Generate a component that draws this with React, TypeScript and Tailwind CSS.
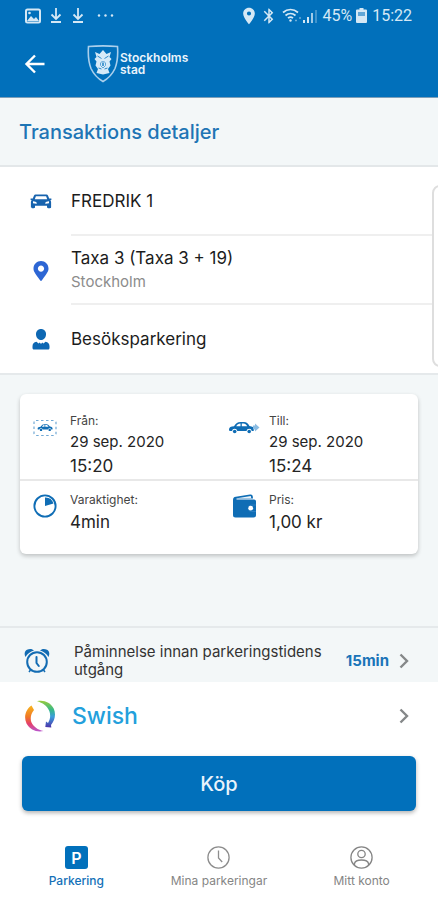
import type { ReactNode } from "react";
import { FaMapMarkerAlt } from "react-icons/fa";
import { MdBluetooth, MdPlace } from "react-icons/md";

const BLUE = "#0170bb";

function StatusBar() {
  return (
    <div className="flex h-8 items-center justify-between pl-6 pr-[26px] text-[#d5e8f5]">
      <div className="flex items-center">
        <svg width="17" height="16" viewBox="0 0 17 16" fill="none" stroke="currentColor" aria-hidden="true">
          <rect x="2" y="1.5" width="14" height="13" rx="1.5" strokeWidth="2" />
          <path d="M3 13l4-5 3 3 2-2 3 4z" fill="currentColor" stroke="none" />
          <circle cx="5.5" cy="5" r="1.3" fill="currentColor" stroke="none" />
        </svg>
        <DownloadMark />
        <DownloadMark />
        <svg className="ml-3" width="17" height="16" viewBox="0 0 17 16" fill="currentColor" aria-hidden="true">
          <circle cx="2" cy="7.5" r="1.2" />
          <circle cx="8.5" cy="7.5" r="1.2" />
          <circle cx="15" cy="7.5" r="1.2" />
        </svg>
      </div>
      <div className="flex items-center font-[Roboto,sans-serif] text-base leading-5">
        <MdPlace size={20} aria-hidden="true" />
        <MdBluetooth className="ml-px" size={18} aria-hidden="true" />
        <svg className="ml-1" width="20" height="16" viewBox="0 0 20 16" fill="none" stroke="currentColor" strokeWidth="1.7" aria-hidden="true">
          <path d="M1 4.5c4.500-4 10.500-4 15 0M3.500 7.500c3-2.700 7-2.700 10 0M6 10.200c1.500-1.300 3.500-1.300 5 0" />
          <circle cx="8.500" cy="12.500" r="1.200" fill="currentColor" stroke="none" />
          <path d="M13 12.500h2M17 10h2" opacity=".5" />
        </svg>
        <svg width="15" height="16" viewBox="0 0 15 16" fill="currentColor" aria-hidden="true">
          <path d="M1 12h2v3H1zM5 9h2v6H5z" />
          <path d="M9 5h2v10H9z" opacity=".75" />
          <path d="M13 2h2v13h-2z" opacity=".3" />
        </svg>
        <span className="ml-[5px]">45%</span>
        <svg className="ml-1 mr-[5px]" width="11" height="16" viewBox="0 0 11 16" aria-hidden="true">
          <path fill="currentColor" d="M3.500 0h4v1.500H10a1 1 0 0 1 1 1V14a1 1 0 0 1-1 1H1a1 1 0 0 1-1-1V2.500a1 1 0 0 1 1-1h2.500z" />
          <path d="M2 4h7v4H2z" fill={BLUE} opacity=".55" />
        </svg>
        <span>15:22</span>
      </div>
    </div>
  );
}

function DownloadMark() {
  return (
    <svg className="ml-2" width="14" height="16" viewBox="0 0 14 16" fill="none" stroke="currentColor" strokeWidth="1.8" aria-hidden="true">
      <path d="M7 0v11M2.500 6.500 7 11l4.500-4.500M2 14h10" />
    </svg>
  );
}

function CityLogo() {
  return (
    <div className="flex items-center gap-px text-[#eaf4fb]">
      <svg width="32" height="38" viewBox="0 0 32 38" aria-hidden="true">
        <path d="M1.500 1.500Q16 .2 30.500 1.500q1 13-2.500 22Q24 32 16 36.500 8 32 4 23.500q-3.500-9-2.500-22z" fill="none" stroke="#a9cfec" strokeWidth="1.600" />
        <path
          d="M8 7l4.500 2L16 5l3.500 4L24 7l-1.500 5 2 2-2 2.500 1 4L21 24l1.500 4-6.500 1.500L9.500 28l1.500-4-2.500-3.500 1-4-2-2.500 2-2z"
          fill="#d6eaf8"
        />
        <path d="M10.500 11l4 2.500M21.500 11l-4 2.500M11.500 23l3 1M20.500 23l-3 1" stroke={BLUE} strokeWidth=".8" fill="none" />
        <path d="M13.500 18c1-2 4-2 5 0v2.500L16 23l-2.500-2.500z" fill="none" stroke="#5fa5d8" strokeWidth="1" />
        <path d="M16 17.500v3.500" stroke={BLUE} strokeWidth="1.300" />
      </svg>
      <span className="text-[12px] font-semibold leading-3">
        Stockholms
        <br />
        stad
      </span>
    </div>
  );
}

function FrontCarIcon() {
  return (
    <svg width="22" height="15" viewBox="0 0 22 15" aria-hidden="true">
      <path
        fill="#1763ae"
        fillRule="evenodd"
        d="M5.500.5h11c.7 0 1.200.3 1.500 1l1.200 3H21c.7 0 .9.800.3 1.200l-.9.600c.5.500.7 1.200.7 1.900V13c0 .8-.4 1.200-1.200 1.200h-1.700c-.8 0-1.200-.4-1.200-1.200v-1.200H5V13c0 .8-.4 1.200-1.200 1.200H2.100C1.300 14.200.900 13.800.900 13V8.200c0-.7.200-1.400.7-1.900l-.9-.600C.1 5.300.3 4.500 1 4.500h1.800l1.200-3c.3-.7.800-1 1.500-1zM5.900 2.300 4.800 5.200h12.400l-1.100-2.900zM3 7.300v1.900l3.200.6c.6 0 .8-.3.600-.8C6.400 8 5 7.300 3 7.300zm16 0c-2 0-3.400.7-3.800 1.700-.2.500 0 .8.600.8l3.200-.6z"
      />
    </svg>
  );
}

function PersonIcon() {
  return (
    <svg width="18" height="21" viewBox="0 0 18 21" fill="#0e68b3" aria-hidden="true">
      <path d="M9 0c3 0 5 2.200 5 5.200S12 11 9 11 4 8.200 4 5.200 6 0 9 0z" />
      <path d="M4.500 12.800 6.500 14.500l1.300-1 1.200 1.500 1.200-1.500 1.300 1 2-1.700c2.700.4 4 2.100 4 4.500V19c0 .9-.5 1.500-1.500 1.500H2C1 20.500.5 19.900.5 19v-1.700c0-2.400 1.300-4.100 4-4.500z" />
    </svg>
  );
}

const SIDE_CAR =
  "M1 9.500c0-2.200 2-3 5-3.200C8 3.200 9.500 2 12.500 2H16c2.500 0 4 1.500 5.500 4 3 .4 4.500 1.300 4.500 3.500 0 1-.5 1.500-1.500 1.500h-.7a2.700 2.700 0 0 0-5.300 0H9.300a2.700 2.700 0 0 0-5.300 0H2.500C1.500 11 1 10.500 1 9.500zM8.200 6.200h4.300V3.500c-2 0-3.200.8-4.300 2.700zm5.600 0h5.400c-1-1.900-2-2.700-3.700-2.700h-1.700z";

function ParkedCarIcon() {
  return (
    <svg width="24" height="18" viewBox="0 0 24 18" aria-hidden="true">
      <rect x="1" y="1.500" width="22" height="15" rx="2" fill="none" stroke="#71a9d5" strokeWidth="1.200" strokeDasharray="2.500 2.500" />
      <g transform="translate(4 4) scale(.6)" fill="#0f6db5">
        <path fillRule="evenodd" d={SIDE_CAR} />
        <circle cx="6.700" cy="11.500" r="2" />
        <circle cx="21.200" cy="11.500" r="2" />
      </g>
    </svg>
  );
}

function DepartingCarIcon() {
  return (
    <svg width="32" height="16" viewBox="0 0 32 14" aria-hidden="true">
      <g fill="#0f6db5">
        <path fillRule="evenodd" d={SIDE_CAR} />
        <circle cx="6.700" cy="11.500" r="1.800" />
        <circle cx="21.200" cy="11.500" r="1.800" />
      </g>
      <path d="M25 5.500h2V3.500l4.500 4-4.500 4v-2h-2z" fill="#8bbce2" />
    </svg>
  );
}

function QuarterClockIcon() {
  return (
    <svg width="24" height="24" viewBox="0 0 24 24" aria-hidden="true">
      <circle cx="12" cy="12" r="10.600" fill="none" stroke="#0f6db5" strokeWidth="1.900" />
      <path d="M12 3.500V12l8.500-2.500A8.500 8.500 0 0 0 12 3.500z" fill="#0f6db5" />
    </svg>
  );
}

function WalletIcon() {
  return (
    <svg width="24" height="24" viewBox="0 0 24 24" aria-hidden="true">
      <path d="M1 6c0-2 .8-2.900 2.800-3.200L18 .5c1.700-.3 2.600.4 2.800 2L21 4.500H4.500v1H22c1.200 0 2 .8 2 2V21c0 1.700-.8 2.500-2.500 2.500h-18C1.800 23.500 1 22.700 1 21z" fill="#0f6db5" />
      <path d="M5 4.200 18.800 2l.4 2.300z" fill="#e8f3fb" />
      <path d="M24 11h-4.500a3.200 3.200 0 0 0 0 6.500H24" fill="#0f6db5" stroke="#3c8acb" strokeWidth=".6" />
      <circle cx="18.700" cy="14.200" r="2.400" fill="#fff" />
    </svg>
  );
}

function AlarmIcon() {
  return (
    <svg width="26" height="26" viewBox="0 0 26 26" fill="none" aria-hidden="true">
      <path d="M1.500 9C0 6 .6 3 3 1.800 5.500.3 8.500.8 10 2.500 6.300 3.600 3.300 5.700 1.500 9zM24.500 9c1.500-3 .9-6-1.500-7.200C20.500.3 17.500.8 16 2.500c3.700 1.100 6.700 3.200 8.500 6.500z" fill="#136cb3" />
      <circle cx="13" cy="14" r="9.800" stroke="#136cb3" strokeWidth="2" />
      <path d="M12.500 9v6l2.300 3" stroke="#136cb3" strokeWidth="2" strokeLinecap="round" />
      <path d="M6.500 22l-1.500 2M19.500 22l1.500 2" stroke="#136cb3" strokeWidth="1.500" />
    </svg>
  );
}

function SwishIcon() {
  return (
    <svg width="32" height="32" viewBox="0 0 32 32" aria-hidden="true">
      <defs>
        <linearGradient id="swish-left" x1="0" y1="0" x2="0" y2="1">
          <stop offset="0" stopColor="#f8b51d" />
          <stop offset=".45" stopColor="#ef7626" />
          <stop offset=".7" stopColor="#e5406a" />
          <stop offset="1" stopColor="#b856cf" />
        </linearGradient>
        <linearGradient id="swish-right" x1="0" y1="0" x2="0" y2="1">
          <stop offset="0" stopColor="#9acb3b" />
          <stop offset=".35" stopColor="#35b88b" />
          <stop offset=".6" stopColor="#3b9ddc" />
          <stop offset="1" stopColor="#4c33a9" />
        </linearGradient>
      </defs>
      <path d="M7.500 5.500 10 10c-3 3.500-4 8-2.700 12 2 4.500 6.500 8 12.200 9C13 32.500 6 30 2.500 23.500-.5 17 1.500 9.500 7.500 5.500z" fill="url(#swish-left)" />
      <path d="M13 1.200c6.500-1.700 13.500 1 16.700 7.300 2.500 5.500 1.300 12-2.700 16.500l.3 2.500-6-.5.700-5.500 2 1.500c2.300-3.500 2.800-8 1.300-12C23.300 6 18.500 2.500 13 1.200z" fill="url(#swish-right)" />
    </svg>
  );
}

function Chevron() {
  return (
    <svg className="shrink-0" width="10" height="16" viewBox="0 0 10 16" fill="none" stroke="#858889" strokeWidth="2.400" aria-hidden="true">
      <path d="M1.500 1.500 8 8l-6.500 6.500" />
    </svg>
  );
}

function DetailRow({ icon, title, subtitle, divider = true }: { icon: ReactNode; title: string; subtitle?: string; divider?: boolean }) {
  return (
    <li className={`flex ${divider ? "h-[69px]" : "h-[68px]"}`}>
      <span className="flex w-[71px] shrink-0 items-center justify-center pl-[10px]">{icon}</span>
      <div className={`flex grow flex-col justify-center ${divider ? "border-b-2 border-[#efefef]" : ""}`}>
        <span className="text-[17px] leading-6 text-[#1c1c1c]">{title}</span>
        {subtitle && <span className="text-[15px] leading-6 text-[#8c8c8c]">{subtitle}</span>}
      </div>
    </li>
  );
}

function Fact({ icon, label, children }: { icon: ReactNode; label: string; children: ReactNode }) {
  return (
    <div className="flex">
      <dt className="flex w-[50px] shrink-0 justify-center">{icon}</dt>
      <dd className="flex flex-col text-[#242424]">
        <span className="text-[12px] leading-5 text-[#444]">{label}</span>
        {children}
      </dd>
    </div>
  );
}

function NavItem({ icon, label, active = false }: { icon: ReactNode; label: string; active?: boolean }) {
  return (
    <a href="#" aria-current={active ? "page" : undefined} className={`flex flex-col items-center gap-1 text-[12px] leading-4 ${active ? "font-medium text-[#1471b8]" : "text-[#858585]"}`}>
      {icon}
      {label}
    </a>
  );
}

export default function App() {
  return (
    <div className="relative min-h-screen overflow-hidden bg-white font-[Inter,sans-serif]">
      <header className="border-b border-[#7d9fb9] bg-[#0170bb] pb-px">
        <StatusBar />
        <div className="flex h-16 items-center gap-[42px] pl-6 text-white">
          <button type="button" aria-label="Tillbaka">
            <svg width="21" height="20" viewBox="0 0 21 20" fill="none" stroke="currentColor" strokeWidth="2.400" aria-hidden="true">
              <path d="M20.500 10H3M11 1.500 2.500 10l8.500 8.500" />
            </svg>
          </button>
          <CityLogo />
        </div>
      </header>

      <main>
        <h1 className="flex h-[69px] items-center border-b-2 border-[#e3e7e9] bg-[#f3f7f8] pl-[19px] text-[20px] font-medium text-[#1e75b5]">
          Transaktions detaljer
        </h1>

        <ul>
          <DetailRow icon={<FrontCarIcon />} title="FREDRIK 1" />
          <DetailRow icon={<FaMapMarkerAlt size={20} color="#2d66d4" aria-hidden="true" />} title="Taxa 3 (Taxa 3 + 19)" subtitle="Stockholm" />
          <DetailRow icon={<PersonIcon />} title="Besöksparkering" divider={false} />
        </ul>

        <section className="border-y-2 border-[#e5e9eb] bg-[#f3f7f8] px-5 pb-[72px] pt-[19px]">
          <dl className="rounded-md bg-white shadow-[0_2px_4px_rgba(0,0,0,0.22)]">
            <div className="grid grid-cols-2 border-b-2 border-[#e8e8e8] pt-[17px]">
              <Fact
                icon={
                  <span className="pt-2">
                    <ParkedCarIcon />
                  </span>
                }
                label="Från:"
              >
                <span className="text-[15px] leading-[22px]">29 sep. 2020</span>
                <span className="text-[17px] leading-[26px]">15:20</span>
              </Fact>
              <Fact
                icon={
                  <span className="pt-2">
                    <DepartingCarIcon />
                  </span>
                }
                label="Till:"
              >
                <span className="text-[15px] leading-[22px]">29 sep. 2020</span>
                <span className="text-[17px] leading-[26px]">15:24</span>
              </Fact>
            </div>
            <div className="grid grid-cols-2 pb-5 pt-[9px]">
              <Fact
                icon={
                  <span className="pt-1">
                    <QuarterClockIcon />
                  </span>
                }
                label="Varaktighet:"
              >
                <span className="text-[17px] leading-6">4min</span>
              </Fact>
              <Fact
                icon={
                  <span className="pt-1">
                    <WalletIcon />
                  </span>
                }
                label="Pris:"
              >
                <span className="text-[17px] leading-6">1,00 kr</span>
              </Fact>
            </div>
          </dl>
        </section>

        <button type="button" className="flex h-[54px] w-full items-center bg-[#f3f7f8] pr-[29px] pt-3 text-left">
          <span className="flex w-[74px] shrink-0 justify-center">
            <AlarmIcon />
          </span>
          <span className="grow text-[15px] leading-[18px] text-[#333]">
            Påminnelse innan parkeringstidens utgång
          </span>
          <span className="mr-[10px] text-[15px] font-bold text-[#1a74b8]">15min</span>
          <Chevron />
        </button>

        <button type="button" className="flex h-[68px] w-full items-center pr-[29px] text-left">
          <span className="flex w-[72px] shrink-0 justify-center pl-2">
            <SwishIcon />
          </span>
          <span className="grow text-[23px] font-medium text-[#23a0dc]">Swish</span>
          <Chevron />
        </button>

        <div className="px-[22px] pt-[6px]">
          <button type="button" className="h-[55px] w-full rounded-md bg-[#0170bb] text-[20px] font-medium text-[#eaf4fb] shadow-[0_2px_4px_rgba(0,0,0,0.3)]">
            Köp
          </button>
        </div>
      </main>

      <nav className="grid grid-cols-3 px-[5px] pt-[35px]">
        <NavItem
          active
          label="Parkering"
          icon={<span aria-hidden="true" className="flex size-[23px] items-center justify-center rounded-[3px] bg-[#0170bb] text-[16px] font-semibold leading-none text-white">P</span>}
        />
        <NavItem
          label="Mina parkeringar"
          icon={
            <svg width="23" height="23" viewBox="0 0 23 23" fill="none" stroke="#8d8d8d" strokeWidth="1.300" aria-hidden="true">
              <circle cx="11.500" cy="11.500" r="10.600" />
              <path d="M11.500 4.500v7.500l3.700 4" />
            </svg>
          }
        />
        <NavItem
          label="Mitt konto"
          icon={
            <svg width="23" height="23" viewBox="0 0 23 23" fill="none" stroke="#858585" strokeWidth="1.300" aria-hidden="true">
              <circle cx="11.500" cy="11.500" r="10.600" />
              <circle cx="11.500" cy="8" r="3.700" />
              <path d="M4.500 19v-1.500c.5-2.500 2.500-3.500 7-3.500s6.500 1 7 3.500V19" />
            </svg>
          }
        />
      </nav>

      <div aria-hidden="true" className="absolute -right-3 top-[185px] h-[182px] w-[18px] rounded-lg border-2 border-[#dedede] bg-white" />
    </div>
  );
}
